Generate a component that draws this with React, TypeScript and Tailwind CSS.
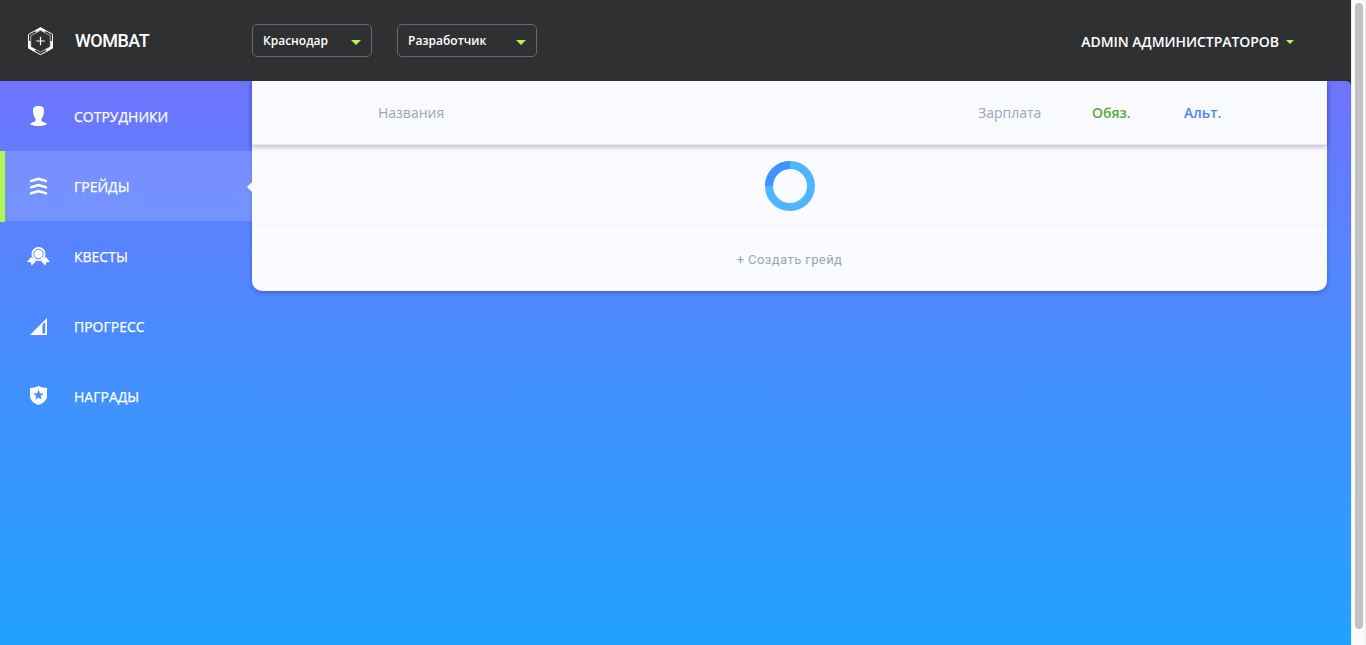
import type { ReactNode } from "react";

function Caret({ className }: { className: string }) {
  return (
    <svg viewBox="0 0 10 5" className={`shrink-0 fill-[#b2f651] ${className}`} preserveAspectRatio="none">
      <path d="M0 0H10L5 5Z" />
    </svg>
  );
}

function Logo() {
  return (
    <svg width="26" height="29" viewBox="0 0 26 29" fill="none" stroke="#fff">
      <path d="M12.500 .7 24.500 7.400V21L12.500 27.700.5 21V7.400Z" strokeWidth="1" />
      <path d="M12.500 3.400 22.300 8.700V19.800L12.500 25.100 2.700 19.800V8.700Z" strokeWidth="0.6" />
      <path d="M7.500 4.400 12.500 1.700 17.500 4.400" strokeWidth="2.200" />
      <path d="M1.400 14V20.600L7 23.600M23.600 14V20.600L18 23.600" strokeWidth="2.500" />
      <path d="M8.200 14H16.800M12.500 9.700V18.300" strokeWidth="1.200" />
    </svg>
  );
}

function PersonIcon() {
  return (
    <svg width="17" height="20" viewBox="0 0 17 20" fill="#fff">
      <path d="M8.500 0C5 0 3 1 3 4.500c0 3.400.6 6 2.500 8v2.200C4.800 16.500.6 16 .1 18.200 1.800 19.400 5 20 8.500 20s6.700-.6 8.400-1.800c-.5-2.200-4.700-1.700-5.400-3.500V12.500C13.400 10.500 14 7.900 14 4.500c0-3.500-2-4.500-5.500-4.500Z" />
    </svg>
  );
}

function ChevronsIcon() {
  return (
    <svg width="17" height="18" viewBox="0 0 17 18" fill="#fff">
      <path d="M0 3 8.500 .6 17 3V5.600L8.500 3.200 0 5.600ZM0 9.200 8.500 6.800 17 9.200v2.600L8.500 9.400 0 11.800ZM0 15.200l8.500-2.400 8.500 2.400v2.600l-8.500-2.400L0 17.800Z" />
    </svg>
  );
}

function MedalIcon() {
  return (
    <svg width="23" height="19" viewBox="0 0 23 19">
      <path d="M4 10 0 15 3.600 15.200 4.700 18.600 9.200 14ZM19 10l4 5-3.600.2-1.100 3.400L13.800 14Z" fill="#fff" />
      <circle cx="11.500" cy="7" r="7" fill="#fff" />
      <circle cx="11.500" cy="7" r="4.700" fill="none" stroke="#5682ff" strokeWidth="0.9" />
    </svg>
  );
}

function ProgressIcon() {
  return (
    <svg width="17" height="17" viewBox="0 0 17 17" fill="#fff" fillRule="evenodd">
      <path d="M17 0V17H0ZM12.400 6.800V15.500H15.200V4Z" />
    </svg>
  );
}

function ShieldIcon() {
  return (
    <svg width="17" height="20" viewBox="0 0 17 20" fill="#fff" fillRule="evenodd">
      <path d="M8.500 0C11 1.300 14 2 17 2v7.500c0 4.500-3.500 8-8.500 9.500C3.500 17.500 0 14 0 9.500V2c3 0 6-.7 8.500-2ZM8.500 3.500 7.100 7.300 3.200 7.500 6.300 9.900 5.200 13.700 8.500 11.500 11.800 13.700 10.700 9.900 13.800 7.500 9.900 7.300Z" />
    </svg>
  );
}

const items: { label: string; icon: ReactNode; active?: boolean }[] = [
  { label: "СОТРУДНИКИ", icon: <PersonIcon /> },
  { label: "ГРЕЙДЫ", icon: <ChevronsIcon />, active: true },
  { label: "КВЕСТЫ", icon: <MedalIcon /> },
  { label: "ПРОГРЕСС", icon: <ProgressIcon /> },
  { label: "НАГРАДЫ", icon: <ShieldIcon /> },
];

function Select({ label, className }: { label: string; className: string }) {
  return (
    <button className={`flex h-[33px] items-center justify-between rounded-[5px] border border-[#686874] pl-2.5 pr-2.5 text-xs font-semibold text-white ${className}`}>
      <span>{label}</span>
      <Caret className="mt-[3px] h-[5px] w-2.5" />
    </button>
  );
}

function Header() {
  return (
    <header className="flex h-[81px] shrink-0 items-start bg-[#2f3032] text-white">
      <div className="flex w-[252px] items-center pl-7 pt-[27px]">
        <Logo />
        <span className="ml-[21px] pb-0.5 font-['Roboto',sans-serif] text-lg font-medium leading-[27px] tracking-[-0.5px]">WOMBAT</span>
      </div>
      <div className="flex gap-[25px] pt-6">
        <Select label="Краснодар" className="w-[120px]" />
        <Select label="Разработчик" className="w-[140px]" />
      </div>
      <div className="ml-auto mr-[57px] flex items-center gap-[7px] pt-8 text-sm font-semibold leading-5">
        <span className="tracking-[-0.05px]">ADMIN АДМИНИСТРАТОРОВ</span>
        <Caret className="h-1 w-2" />
      </div>
    </header>
  );
}

function Sidebar() {
  return (
    <nav className="w-[252px] shrink-0">
      {items.map((item) => (
        <div key={item.label} className={`relative flex h-[70px] items-center ${item.active ? "bg-white/15" : ""}`}>
          {item.active && <span className="absolute left-0 top-0 h-[71px] w-[5px] bg-[#b2f651]" />}
          <span className="ml-[26px] flex w-[25px] justify-center">{item.icon}</span>
          <span className="ml-[23px] pt-px text-sm font-medium text-white [-webkit-text-stroke:0.25px_#fff]">{item.label}</span>
          {item.active && (
            <svg className="absolute right-0 top-[31px]" width="5" height="10" viewBox="0 0 5 10" fill="#f9faff">
              <path d="M5 0V10L0 5Z" />
            </svg>
          )}
        </div>
      ))}
    </nav>
  );
}

function Spinner() {
  return (
    <svg width="50" height="50" viewBox="0 0 50 50" fill="none" strokeWidth="8">
      <circle cx="25" cy="25" r="21" stroke="#50b5ff" />
      <path d="M4 25A21 21 0 0 1 25 4" stroke="#4094ff" />
    </svg>
  );
}

function Grades() {
  return (
    <main className="w-[1075px] shrink-0">
      <section className="rounded-b-[10px] bg-[#fafbff] shadow-[0_2px_5px_rgba(20,20,60,0.27)]">
        <div className="relative flex h-16 items-center border-b border-[#e9e9f3] bg-[#f9faff] text-sm text-[#9ba4b9] shadow-[0_2px_5px_rgba(20,20,50,0.27)]">
          <span className="ml-[126px] w-[600px]">Названия</span>
          <span className="w-[114px]">Зарплата</span>
          <span className="w-[92px] font-semibold text-[#53ae32]">Обяз.</span>
          <span className="font-semibold text-[#5085f6]">Альт.</span>
        </div>
        <div className="flex h-20 justify-center pt-4">
          <Spinner />
        </div>
        <button className="flex h-[66px] w-full items-center justify-center border-t-2 border-[#f5f6fa] pt-0.5 font-['Roboto',sans-serif] text-[13px] tracking-[0.42px] text-[#9ba4b9]">
          + Создать грейд
        </button>
      </section>
    </main>
  );
}

export default function App() {
  return (
    <div className="flex h-[645px] w-[1366px] overflow-hidden bg-[#fafafa] font-['Open_Sans',sans-serif]">
      <div className="flex w-[1351px] flex-col bg-[#2f3032]">
        <Header />
        <div className="flex flex-1 overflow-hidden rounded-tr-[5px] bg-[linear-gradient(#6e74ff,#5088ff_38%,#4092ff_57%,#22a2fc)]">
          <Sidebar />
          <Grades />
        </div>
      </div>
      <div className="flex w-[15px] justify-center border-x border-[#ededed] pt-[3px]">
        <div className="h-[626px] w-2 rounded-full bg-[#c1c1c1]" />
      </div>
    </div>
  );
}
